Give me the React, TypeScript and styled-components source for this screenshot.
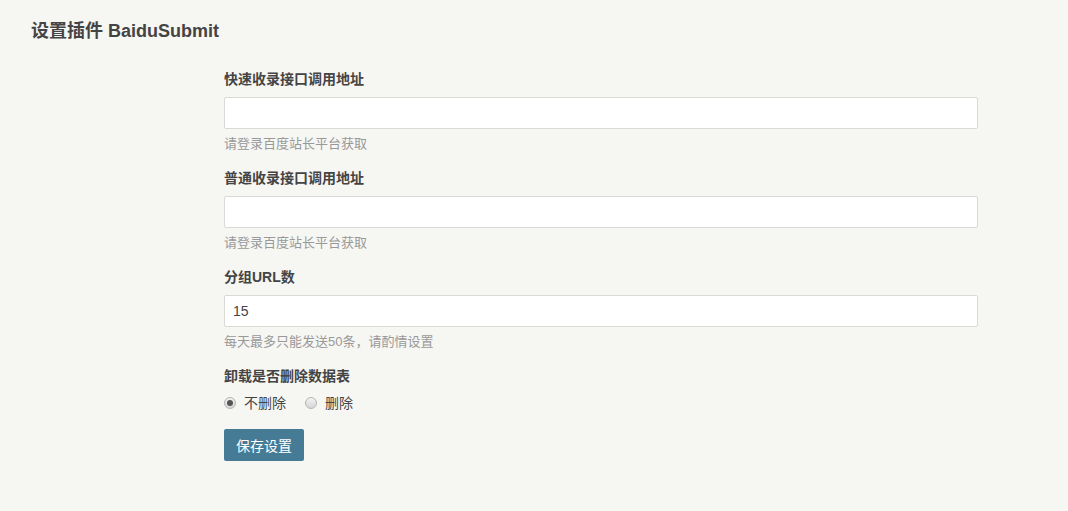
import styled, { createGlobalStyle } from 'styled-components';

const GlobalStyle = createGlobalStyle`
	html, body {
		margin: 0;
		padding: 0;
		background: #f6f6f3;
	}
	body {
		font-family: 'Liberation Sans', Arial, 'Noto Sans CJK SC', sans-serif;
		font-size: 14px;
		color: #444;
		min-height: 511px;
	}
`;

const Page = styled.div`
	min-height: 511px;
	background: #f6f6f3;
	padding: 19px 0 40px;
	box-sizing: border-box;
`;

const Title = styled.h2`
	margin: 0 0 0 31px;
	font-size: 18px;
	line-height: 24px;
	font-weight: bold;
	color: #444;
`;

const Form = styled.form`
	width: 754px;
	margin: 26px 0 0 224px;
	display: flex;
	flex-direction: column;
	gap: 14px;
`;

const Option = styled.div`
	display: flex;
	flex-direction: column;
`;

const Label = styled.label`
	display: block;
	font-weight: bold;
	line-height: 20px;
	margin-bottom: 8px;
	color: #444;
`;

const TextInput = styled.input`
	box-sizing: border-box;
	width: 100%;
	height: 32px;
	padding: 0 8px;
	border: 1px solid #d9d9d6;
	border-radius: 2px;
	background: #fff;
	font-family: inherit;
	font-size: 14px;
	color: #444;
	outline: none;
`;

const Description = styled.p`
	margin: 5px 0 0;
	line-height: 20px;
	font-size: 13px;
	color: #999;
`;

const RadioRow = styled.div`
	display: flex;
	align-items: center;
	gap: 19px;
	margin-top: -1px;
	height: 20px;
`;

const RadioLabel = styled.label`
	display: flex;
	align-items: center;
	gap: 8px;
	line-height: 20px;
	color: #444;
`;

const Radio = styled.input`
	appearance: none;
	-webkit-appearance: none;
	margin: 0;
	width: 12px;
	height: 12px;
	border-radius: 50%;
	border: 1px solid #b5b5b5;
	background: linear-gradient(#f2f2f2, #d6d6d6);
	box-sizing: border-box;
	position: relative;
	&:checked::after {
		content: '';
		position: absolute;
		left: 2px;
		top: 2px;
		width: 6px;
		height: 6px;
		border-radius: 50%;
		background: #555;
	}
`;

const Submit = styled.button`
	align-self: flex-start;
	margin-top: 2px;
	height: 32px;
	padding: 0 12px;
	border: none;
	border-radius: 2px;
	background: #467b96;
	color: #fff;
	font-family: inherit;
	font-size: 14px;
	cursor: pointer;
`;

const App = () => {
	return (
		<Page>
			<GlobalStyle />
			<Title>设置插件 BaiduSubmit</Title>
			<Form onSubmit={(e) => e.preventDefault()}>
				<Option>
					<Label>快速收录接口调用地址</Label>
					<TextInput type='text' />
					<Description>请登录百度站长平台获取</Description>
				</Option>
				<Option>
					<Label>普通收录接口调用地址</Label>
					<TextInput type='text' />
					<Description>请登录百度站长平台获取</Description>
				</Option>
				<Option>
					<Label>分组URL数</Label>
					<TextInput type='text' defaultValue='15' />
					<Description>每天最多只能发送50条，请酌情设置</Description>
				</Option>
				<Option>
					<Label>卸载是否删除数据表</Label>
					<RadioRow>
						<RadioLabel>
							<Radio type='radio' name='drop' defaultChecked />
							不删除
						</RadioLabel>
						<RadioLabel>
							<Radio type='radio' name='drop' />
							删除
						</RadioLabel>
					</RadioRow>
				</Option>
				<Submit type='submit'>保存设置</Submit>
			</Form>
		</Page>
	);
};

export default App;
